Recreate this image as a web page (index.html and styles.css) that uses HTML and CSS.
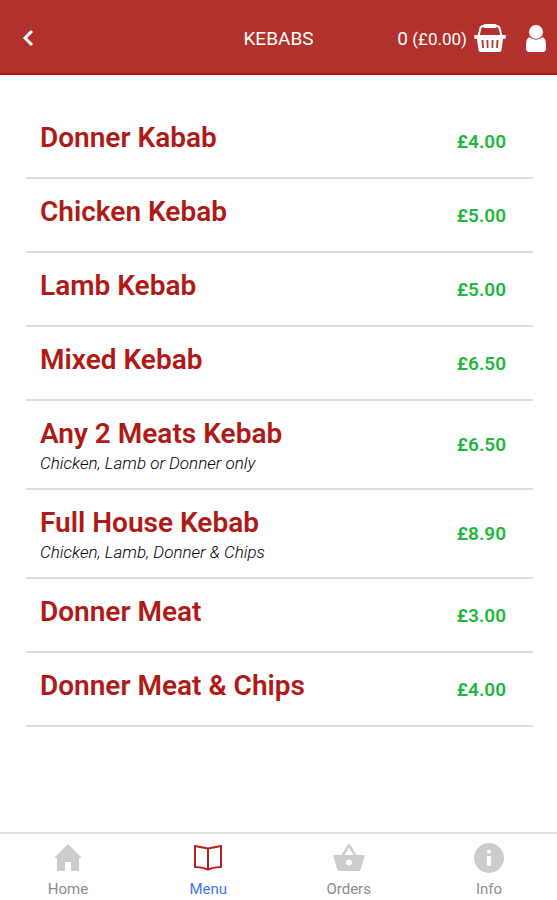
FILE: index.html
```html
<!DOCTYPE html>
<html lang="en">
<head>
  <meta charset="UTF-8" />
  <meta name="viewport" content="width=device-width, initial-scale=1.0"/>
  <title>Kebabs</title>
  <link rel="stylesheet" href="styles.css">
</head>
<body>
  <header class="topbar">
    <button class="back" type="button" aria-label="Back">
      <svg width="12" height="18" viewBox="0 0 12 18"><path d="M10 2 3 9l7 7" fill="none" stroke="#fff" stroke-width="3"/></svg>
    </button>
    <h1>KEBABS</h1>
    <div class="actions">
      <button class="cart" type="button" aria-label="Basket">
        <span><span class="count">0</span> (£0.00)</span>
        <svg width="32" height="30" viewBox="0 0 32 30">
          <path d="M4.500 13 6.500 5Q7 3 9.500 3H22.500Q25 3 25.500 5L27.500 13" fill="none" stroke="#fff" stroke-width="2"/>
          <rect x="9" y="1" width="14" height="4" rx="2" fill="#fff"/>
          <path fill="#fff" fill-rule="evenodd" d="M1 12h30q1 0 1 2t-2 2h-1l-1.500 11q-.4 2-2 2h-19q-1.600 0-2-2L3 16H2q-2 0-2-2t1-2zM7.500 17l.7 8h1.700L9.400 17zM12.500 17l.3 8h1.700l-.2-8zM17.700 17l-.2 8h1.700l.3-8zM22.600 17l-.5 8h1.700l.7-8z"/>
        </svg>
      </button>
      <button class="user" type="button" aria-label="Account">
        <svg width="20" height="27" viewBox="0 0 20 27">
          <circle cx="10" cy="7" r="7" fill="#fff"/>
          <path d="M3.500 12q6.500 5 13 0 3.500 1.500 3.500 8v3q0 4-3 4H3q-3 0-3-4v-3q0-6.500 3.500-8z" fill="#fff"/>
          <path d="M3.500 11q6.500 6.500 13 0" fill="none" stroke="#b3312d" stroke-width=".6"/>
        </svg>
      </button>
    </div>
  </header>

  <main>
    <ul class="items">
      <li class="item">
        <div class="info"><h2>Donner Kabab</h2></div>
        <span class="price">£4.00</span>
      </li>
      <li class="item">
        <div class="info"><h2>Chicken Kebab</h2></div>
        <span class="price">£5.00</span>
      </li>
      <li class="item">
        <div class="info"><h2>Lamb Kebab</h2></div>
        <span class="price">£5.00</span>
      </li>
      <li class="item">
        <div class="info"><h2>Mixed Kebab</h2></div>
        <span class="price">£6.50</span>
      </li>
      <li class="item">
        <div class="info"><h2>Any 2 Meats Kebab</h2><p>Chicken, Lamb or Donner only</p></div>
        <span class="price">£6.50</span>
      </li>
      <li class="item">
        <div class="info"><h2>Full House Kebab</h2><p>Chicken, Lamb, Donner &amp; Chips</p></div>
        <span class="price">£8.90</span>
      </li>
      <li class="item">
        <div class="info"><h2>Donner Meat</h2></div>
        <span class="price">£3.00</span>
      </li>
      <li class="item">
        <div class="info"><h2>Donner Meat &amp; Chips</h2></div>
        <span class="price">£4.00</span>
      </li>
    </ul>
  </main>

  <nav class="tabs">
    <a class="tab" href="#home">
      <svg width="32" height="32" viewBox="0 0 32 32"><path fill="#ccc" d="M16 2 30 16h-3v13h-8v-9h-6v9H5V16H2z"/></svg>
      Home
    </a>
    <a class="tab active" href="#menu">
      <svg width="32" height="32" viewBox="0 0 32 32"><path fill="none" stroke="#b3201c" stroke-width="2" stroke-linejoin="round" d="M16 6.500 3 4V25Q10 25 16 27.500 22 25 29 25V4L16 6.500V27"/></svg>
      Menu
    </a>
    <a class="tab" href="#orders">
      <svg width="32" height="32" viewBox="0 0 32 32"><path fill="#ccc" fill-rule="evenodd" d="M16 2q1 0 1.500 1l6 10H31q.8 0 .6 1l-4 14q-.2 1-1.200 1H5.600q-1 0-1.200-1L.4 14q-.2-1 .6-1h7.500l6-10Q15 2 16 2zM11.500 13h9L16 5.500zM16 17.500a3 3 0 1 0 0 6 3 3 0 0 0 0-6z"/></svg>
      Orders
    </a>
    <a class="tab" href="#info">
      <svg width="32" height="32" viewBox="0 0 32 32"><circle cx="16" cy="16" r="15" fill="#ccc"/><circle cx="16" cy="9.500" r="2" fill="#fff"/><rect x="14" y="14" width="4" height="10" rx="1" fill="#fff"/></svg>
      Info
    </a>
  </nav>
</body>
</html>
```
FILE: styles.css
```css
* {
  box-sizing: border-box;
}
body {
  margin: 0;
  min-height: 100vh;
  display: flex;
  flex-direction: column;
  font-family: Roboto, "Liberation Sans", sans-serif;
  background: #fff;
  color: #000;
}
h1, h2, p, ul {
  margin: 0;
  padding: 0;
}
button {
  padding: 0;
  border: none;
  background: none;
  color: #fff;
  font: inherit;
  cursor: pointer;
}
svg {
  display: block;
}
.topbar {
  display: grid;
  grid-template-columns: 1fr auto 1fr;
  align-items: center;
  height: 75px;
  padding: 3px 11px 0;
  background: #b3312d;
  border-bottom: 2px solid #b01410;
  color: #fff;
}
.back {
  justify-self: start;
  padding-left: 11px;
}
.topbar h1 {
  font-size: 19px;
  font-weight: 400;
}
.actions {
  display: flex;
  justify-content: flex-end;
  align-items: center;
  gap: 20px;
}
.cart {
  display: flex;
  align-items: center;
  gap: 7px;
  font-size: 17px;
}
.count {
  font-size: 19px;
}
main {
  flex: 1;
  padding: 30px 24px 0 26px;
}
.items {
  list-style: none;
}
.item {
  display: flex;
  justify-content: space-between;
  align-items: center;
  min-height: 74px;
  padding: 0 27px 0 14px;
  border-bottom: 2px solid #ddd;
}
.info {
  align-self: flex-start;
  padding: 17px 0 12px;
}
.info h2 {
  font-size: 28px;
  font-weight: 600;
  line-height: 32px;
  color: #b01a16;
}
.info p {
  font-size: 17px;
  font-weight: 300;
  font-style: italic;
  line-height: 26px;
}
.price {
  font-size: 19px;
  font-weight: 600;
  color: #1db83c;
}
.tabs {
  display: flex;
  justify-content: space-between;
  height: 68px;
  padding: 8px 47px 0;
  border-top: 2px solid #e2e2e2;
}
.tab {
  display: flex;
  flex-direction: column;
  align-items: center;
  gap: 6px;
  width: 42px;
  font-size: 15px;
  line-height: 18px;
  color: #8c8c8c;
  text-decoration: none;
}
.active {
  color: #3f76f0;
}
```
